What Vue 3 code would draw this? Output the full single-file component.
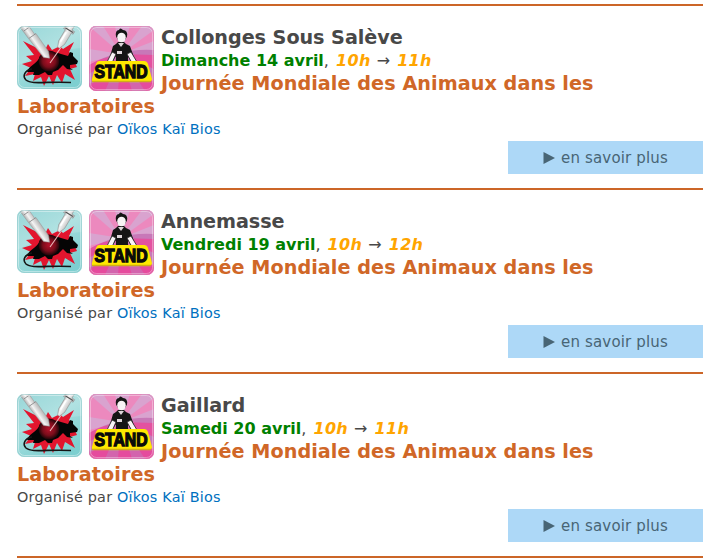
<template>
  <main class="agenda">
    <!-- Shared drawings for the event icons -->
    <svg class="sprites" aria-hidden="true">
      <defs>
        <linearGradient id="aqua" x1="0" y1="0" x2="0.6" y2="1">
          <stop offset="0" stop-color="#86cfd1"/>
          <stop offset="0.5" stop-color="#a3dddd"/>
          <stop offset="1" stop-color="#7dcfd0"/>
        </linearGradient>
        <linearGradient id="steel" x1="0" y1="0" x2="1" y2="0">
          <stop offset="0" stop-color="#aaa"/>
          <stop offset="0.4" stop-color="#f4f4f4"/>
          <stop offset="1" stop-color="#b5b5b5"/>
        </linearGradient>
        <radialGradient id="wound">
          <stop offset="0" stop-color="#b5122a"/>
          <stop offset="0.6" stop-color="#7a0d1b"/>
          <stop offset="1" stop-color="#1c0508"/>
        </radialGradient>
        <clipPath id="tile-lab"><rect width="65" height="63" rx="7"/></clipPath>
        <clipPath id="tile-stand"><rect width="65" height="65" rx="7"/></clipPath>
      </defs>
      <symbol id="lab" viewBox="0 0 65 65">
        <g clip-path="url(#tile-lab)">
          <rect width="65" height="63" fill="url(#aqua)"/>
          <path d="M0 0H65V22Q30 24 0 40Z" fill="#fff" opacity="0.15"/>
          <path d="M6 15 20 22 27 26 31 18 35 24 43 20 46 23 57 16 52 26 55 30 60 41 53 43 58 54 48 48 45 57 40 49 36 59 32 50 27 60 24 51 16 55 18 48 8 50 14 42 5 38 15 35 9 30 17 29Z" fill="#e2152e"/>
          <path d="M10 46C12 40 17 39 21 34C26 25 37 25 44 28L51 30 53 26 56 27 56 30 61 35 60 38 53 39 53 42 56 44 50 43 46 39 41 44 36 46 35 49 31 49 28 46 22 49 16 49 17 46Z" fill="#050505"/>
          <path d="M15 43C8 44 5 50 9 54C15 59 31 55 54 56.5" fill="none" stroke="#151515" stroke-width="1.6"/>
          <circle cx="32" cy="35" r="10.5" fill="url(#wound)"/>
          <path d="M45 20 33 37" stroke="#e8bcbc" stroke-width="1.1"/>
          <g transform="rotate(-35 7 0)">
            <path d="M3-6H11V13H12.5V35L9.5 41 5 37 3.5 13Z" fill="url(#steel)" stroke="#999" stroke-width="0.5"/>
            <path d="M4 13H12M4 4H10" stroke="#888" stroke-width="0.8"/>
          </g>
          <g transform="rotate(31 54 0)">
            <path d="M50-6H57V3H60V6H58V19L55.5 25H53.5L51 19V6H49V3H50Z" fill="url(#steel)" stroke="#888" stroke-width="0.5"/>
            <path d="M50 4.5H59" stroke="#555" stroke-width="1.2"/>
            <path d="M53 8V19" stroke="#fff" stroke-width="1.8"/>
          </g>
        </g>
        <rect x="1.5" y="1.5" width="62" height="60" rx="6" fill="none" stroke="#fff" stroke-opacity="0.4"/>
        <rect x="0.5" y="0.5" width="64" height="62" rx="7" fill="none" stroke="#9fcfd1" stroke-opacity="0.6"/>
      </symbol>
      <symbol id="stand" viewBox="0 0 65 65">
        <g clip-path="url(#tile-stand)">
          <rect width="65" height="65" fill="#e352a0"/>
          <path d="M32 28 0 0H14ZM32 28 26 0H41ZM32 28 53 0H65V4ZM32 28 65 15V29ZM32 28 65 43V56ZM32 28 56 65H43ZM32 28 29 65H16ZM32 28 0 61V48ZM32 28 0 36V23Z" fill="#c878b8"/>
          <path d="M0 0H65V24Q30 22 0 39Z" fill="#fff" opacity="0.32"/>
          <path d="M27 18 24 20 20 34 22 38 27 30V37H39V30L43 38 46 34 41 20 37 18 35 16H29Z" fill="#151515"/>
          <path d="M23 26 27 28 23 37 18 36ZM38 28 42 26 48 36 43 37Z" fill="#f8f4f6" stroke="#222" stroke-width="0.8"/>
          <path d="M29 17H35L32 21ZM28 25H33V28H28Z" fill="#ddd5d9"/>
          <path d="M27 10.5Q26 4 30 4Q31 1 34 4Q39 4 38 10.5L36 14H29Z" fill="#151515"/>
          <ellipse cx="32.5" cy="11.5" rx="4.3" ry="4.8" fill="#f8f3f5"/>
          <path d="M10 35H55Q58 35 59 38L63 53Q63 56 59 56H6Q2 56 3 53L7 38Q8 35 10 35Z" fill="#ffe800"/>
          <path d="M3 55.5H62" stroke="#d0ad18" stroke-width="1.4"/>
          <path d="M0 57H65V65H0Z" fill="#e83f99" opacity="0.35"/>
        </g>
        <rect x="1.5" y="1.5" width="62" height="62" rx="6" fill="none" stroke="#fff" stroke-opacity="0.35"/>
        <rect x="0.5" y="0.5" width="64" height="64" rx="7" fill="none" stroke="#d98bb7" stroke-opacity="0.6"/>
      </symbol>
    </svg>

    <article class="event" v-for="event in events" :key="event.city">
      <svg class="event-icon"><use href="#lab"/></svg>
      <svg class="event-icon" viewBox="0 0 65 65">
        <use href="#stand"/>
        <text x="5.5" y="51.5" textLength="53" lengthAdjust="spacingAndGlyphs" class="stand-label">STAND</text>
      </svg>
      <div class="city">{{ event.city }}</div>
      <div class="date"><strong>{{ event.date }}</strong>, <em>{{ event.start }}</em> <span class="arrow">→</span> <em>{{ event.end }}</em></div>
      <h2>Journée Mondiale des Animaux dans les Laboratoires</h2>
      <div class="organizer">Organisé par <a href="#">Oïkos Kaï Bios</a></div>
      <a href="#" class="more">
        <svg class="play" viewBox="0 0 12 12"><path d="M0.5 0 12 6 0.5 12Z" fill="currentColor"/></svg>
        <span>en savoir plus</span>
      </a>
    </article>
  </main>
</template>

<script setup>
const events = [
  { city: 'Collonges Sous Salève', date: 'Dimanche 14 avril', start: '10h', end: '11h' },
  { city: 'Annemasse', date: 'Vendredi 19 avril', start: '10h', end: '12h' },
  { city: 'Gaillard', date: 'Samedi 20 avril', start: '10h', end: '11h' }
]
</script>

<style>
body {
  margin: 0;
  background: #fff;
  overflow: hidden;
}
</style>

<style scoped>
.agenda {
  box-sizing: border-box;
  height: 560px;
  padding: 4px 15px 0 17px;
  color: #484848;
  font-family: Verdana, 'DejaVu Sans', sans-serif;
  font-size: 14.4px;
}

.sprites {
  position: absolute;
  width: 0;
  height: 0;
}

.stand-label {
  font: bold 18px 'Liberation Sans', sans-serif;
  fill: #090909;
  stroke: #090909;
  stroke-width: 1.3px;
}

.event {
  display: flow-root;
  box-sizing: border-box;
  height: 184px;
  padding-top: 20px;
  border-top: 2px solid #cc6628;
}

.event:last-child {
  height: 186px;
  border-bottom: 2px solid #cc6628;
}

.event-icon {
  float: left;
  width: 65px;
  height: 65px;
  margin-right: 7px;
}

.city {
  font-size: 19.2px;
  line-height: 23px;
  font-weight: bold;
  letter-spacing: -0.05px;
}

.date {
  font-size: 16px;
  line-height: 23px;
}

.date strong {
  color: #008000;
}

.date em {
  margin-left: 2px;
  color: #ffa500;
  font-weight: bold;
  letter-spacing: 0.3px;
}

.arrow {
  margin-left: 1px;
}

h2 {
  margin: 0;
  color: #d06727;
  font-size: 19.2px;
  line-height: 23px;
  letter-spacing: 0.06px;
}

.organizer {
  line-height: 23px;
  letter-spacing: 0.2px;
}

.organizer a {
  color: #0070c0;
  text-decoration: none;
}

.more {
  display: flex;
  align-items: center;
  justify-content: center;
  gap: 6px;
  width: 195px;
  height: 33px;
  margin-left: auto;
  background: #add8f7;
  color: #486575;
  font-size: 15px;
  letter-spacing: 0.15px;
  text-decoration: none;
}

.play {
  width: 12px;
  height: 12px;
}
</style>
